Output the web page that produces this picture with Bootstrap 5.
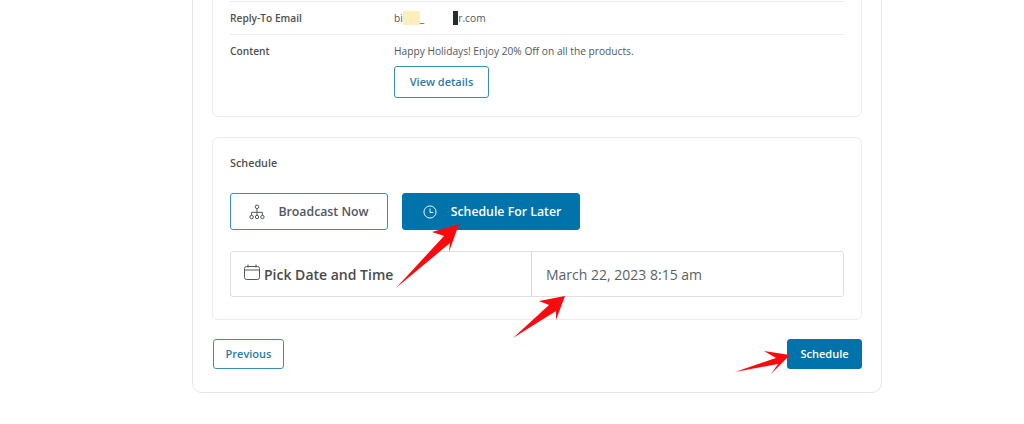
<!DOCTYPE html>
<html lang="en">
<head>
<meta charset="utf-8">
<title>Schedule</title>
<link rel="stylesheet" href="https://cdn.jsdelivr.net/npm/bootstrap@5.3.0/dist/css/bootstrap.min.css">
<style>
html,body{height:424px;overflow:hidden;background:#fff}
body{font-family:"Open Sans","Noto Sans",sans-serif;color:#50575e;position:relative}
.shell{width:690px;margin:-40px 0 0 192px;height:433px;border:1px solid #e2e4ee;border-radius:10px;padding:0 19px;background:#fff}
.panel{border:1px solid #ebebef;border-radius:6px;background:#fff;padding:0 17px}
.info-panel{height:156px;margin-bottom:20px}
.info-row{display:flex;border-bottom:1px solid #ebecf1;font-size:10.2px}
.info-row.top-row{height:40px}
.info-row.mail-row{height:33px;align-items:center;padding-top:2px}
.info-row.content-row{border-bottom:0;padding-top:9px;align-items:flex-start}
.info-key{width:164px;font-weight:600;color:#50504e;flex:none}
.patch-y{display:inline-block;width:17px;height:14px;background:#feeebb;vertical-align:-3px}
.patch-u{display:inline-block;width:29px;vertical-align:baseline}
.patch-k{display:inline-block;width:5px;height:14px;background:#2a2a2a;vertical-align:-3px}
.btn-out,.btn-fill{border-radius:3px;font-weight:600;font-size:11px;display:inline-flex;align-items:center;justify-content:center;padding:0}
.btn-out{border:1px solid #3a8fba;color:#2c7ba6;background:#fff}
.btn-fill{border:1px solid #0073aa;color:#fff;background:#0073aa}
.view-btn{width:95px;height:32px;margin-top:7px}
.sched-panel{height:183px}
.sched-title{font-size:10.8px;font-weight:600;color:#50504e;padding-top:17px;line-height:15px;margin-bottom:23px}
.mode-btn{font-size:12.3px;height:37px;gap:14px}
.mode-btn span{position:relative;top:1px}
.mode-a{width:158px;color:#50575e;font-weight:600;gap:13px}
.mode-b{width:178px;padding-left:2px}
.mode-row{gap:14px;margin-bottom:21px}
.picker{height:46px;border:1px solid #dfe0e4;border-radius:3px}
.pick-l{width:301px;border-right:1px solid #d8d8dc;padding-left:13px;gap:4px;font-size:14px;font-weight:600;color:#4a4a4a}
.cal-icon{margin-top:-3px}
.pick-r{padding-left:14px;font-size:14px;color:#5a5f66}
.foot-row{margin-top:19px}
.foot-row .btn-out,.foot-row .btn-fill{height:30px}
.prev-btn{width:71px;margin-left:1px}
.go-btn{width:75px}
.arrows{position:absolute;left:0;top:0;pointer-events:none}
</style>
</head>
<body>
<div class="shell">
  <div class="panel info-panel">
    <div class="info-row top-row"></div>
    <div class="info-row mail-row">
      <div class="info-key">Reply-To Email</div>
      <div>bi<span class="patch-y"></span>_<span class="patch-u"></span><span class="patch-k"></span>r.com</div>
    </div>
    <div class="info-row content-row">
      <div class="info-key">Content</div>
      <div class="d-flex flex-column align-items-start">
        <div>Happy Holidays! Enjoy 20% Off on all the products.</div>
        <button class="btn-out view-btn" type="button">View details</button>
      </div>
    </div>
  </div>
  <div class="panel sched-panel">
    <div class="sched-title">Schedule</div>
    <div class="d-flex mode-row">
      <button class="btn-out mode-btn mode-a" type="button">
        <svg width="16" height="16" viewBox="0 0 16 16" fill="none" stroke="#50575e" stroke-width="1"><circle cx="8" cy="2.8" r="1.8"/><circle cx="2.6" cy="13" r="1.7"/><circle cx="8" cy="13" r="1.7"/><circle cx="13.4" cy="13" r="1.7"/><path d="M8 4.6V11.3M2.6 11.3V8.3H13.4V11.3"/></svg>
        <span>Broadcast Now</span>
      </button>
      <button class="btn-fill mode-btn mode-b" type="button">
        <svg width="14" height="14" viewBox="0 0 15 15" fill="none" stroke="#fff" stroke-width="1"><circle cx="7.5" cy="7.5" r="6.5"/><path d="M7.5 3.8V8H11"/></svg>
        <span>Schedule For Later</span>
      </button>
    </div>
    <div class="picker d-flex">
      <div class="pick-l d-flex align-items-center">
        <svg class="cal-icon" width="16" height="17" viewBox="0 0 16 17" fill="none" stroke="#50575e" stroke-width="1"><rect x="0.5" y="2.5" width="15" height="13" rx="2"/><path d="M0.5 6H15.5M4 0.5V3.5M12 0.5V3.5"/></svg>
        <span>Pick Date and Time</span>
      </div>
      <div class="pick-r d-flex align-items-center">March 22, 2023 8:15 am</div>
    </div>
  </div>
  <div class="d-flex justify-content-between foot-row">
    <button class="btn-out prev-btn" type="button">Previous</button>
    <button class="btn-fill go-btn" type="button">Schedule</button>
  </div>
</div>
<svg class="arrows" width="1024" height="424" viewBox="0 0 1024 424" fill="#fa0a0f">
  <polygon points="459,224 432,232 444,236 396,288 450,243 449,252"/>
  <polygon points="565,296 539,301 549,305 513,338 556,311 556,320"/>
  <polygon points="790,355 764,351 776,358 735,372 778,364 771,374"/>
</svg>
<script src="https://cdn.jsdelivr.net/npm/bootstrap@5.3.0/dist/js/bootstrap.bundle.min.js"></script>
</body>
</html>
